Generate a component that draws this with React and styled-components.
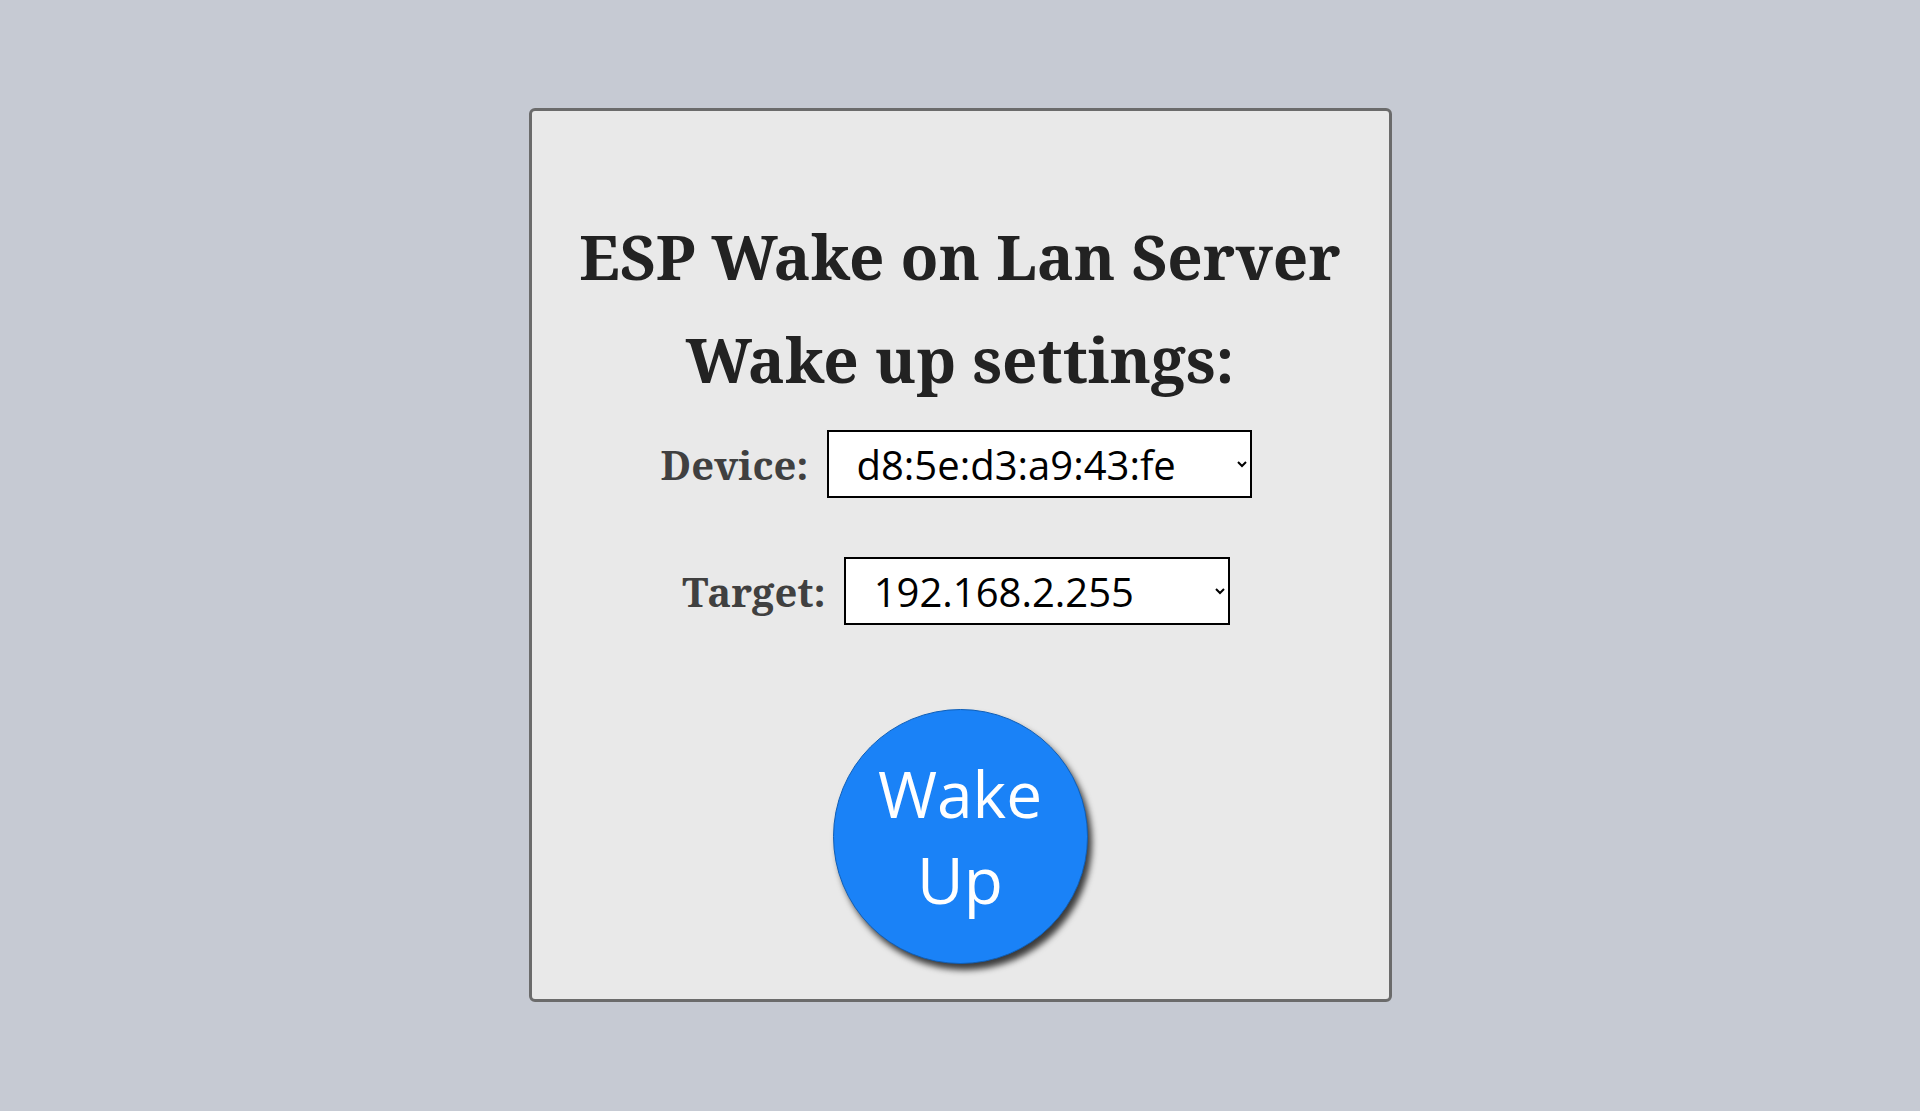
import React from 'react';
import styled, { createGlobalStyle } from 'styled-components';

const GlobalStyle = createGlobalStyle`
    body {
        margin: 0;
        background-color: #c6cad3;
        font-family: "Open Sans", "Noto Sans", sans-serif;
    }
`;

const Page = styled.div`
    display: flex;
    justify-content: center;
    padding-top: 108px;
    min-height: 1111px;
    box-sizing: border-box;
`;

const Card = styled.div`
    width: 863px;
    height: 894px;
    box-sizing: border-box;
    border: 3px solid #6b6b6b;
    border-radius: 6px;
    background-color: #e9e9e9;
    display: flex;
    flex-direction: column;
    align-items: center;
    padding-top: 94px;
`;

const Title = styled.h1`
    margin: 0;
    font-family: "Noto Serif", "DejaVu Serif", serif;
    font-weight: bold;
    font-size: 62px;
    line-height: 103px;
    color: #222;
`;

const Field = styled.div`
    display: flex;
    align-items: center;
    gap: 18px;
    padding-right: 8px;
    margin-top: ${p => p.$top}px;
`;

const Label = styled.label`
    font-family: "Noto Serif", "DejaVu Serif", serif;
    font-weight: bold;
    font-size: 40px;
    color: #404040;
`;

const Select = styled.select`
    width: ${p => p.$w}px;
    height: 68px;
    border: 2px solid #000;
    border-radius: 0;
    background-color: #fff;
    font-family: "Open Sans", sans-serif;
    font-size: 40px;
    padding-left: 24px;
    color: #000;
`;

const WakeButton = styled.button`
    margin-top: 84px;
    width: 255px;
    height: 255px;
    border-radius: 50%;
    border: 1px solid #0f5fb8;
    background-color: #1a82f7;
    color: #fff;
    font-family: "Open Sans", sans-serif;
    font-size: 64px;
    line-height: 86px;
    box-shadow: 4px 6px 6px rgba(0, 0, 0, 0.75);
    cursor: pointer;
    padding: 0 20px;
`;

function App() {
  return (
    <>
      <GlobalStyle />
      <Page>
        <Card>
          <Title>ESP Wake on Lan Server</Title>
          <Title>Wake up settings:</Title>
          <Field $top={19}>
            <Label>Device:</Label>
            <Select $w={425} defaultValue="d8:5e:d3:a9:43:fe">
              <option>d8:5e:d3:a9:43:fe</option>
            </Select>
          </Field>
          <Field $top={59}>
            <Label>Target:</Label>
            <Select $w={386} defaultValue="192.168.2.255">
              <option>192.168.2.255</option>
            </Select>
          </Field>
          <WakeButton>Wake Up</WakeButton>
        </Card>
      </Page>
    </>
  )
}

export default App
